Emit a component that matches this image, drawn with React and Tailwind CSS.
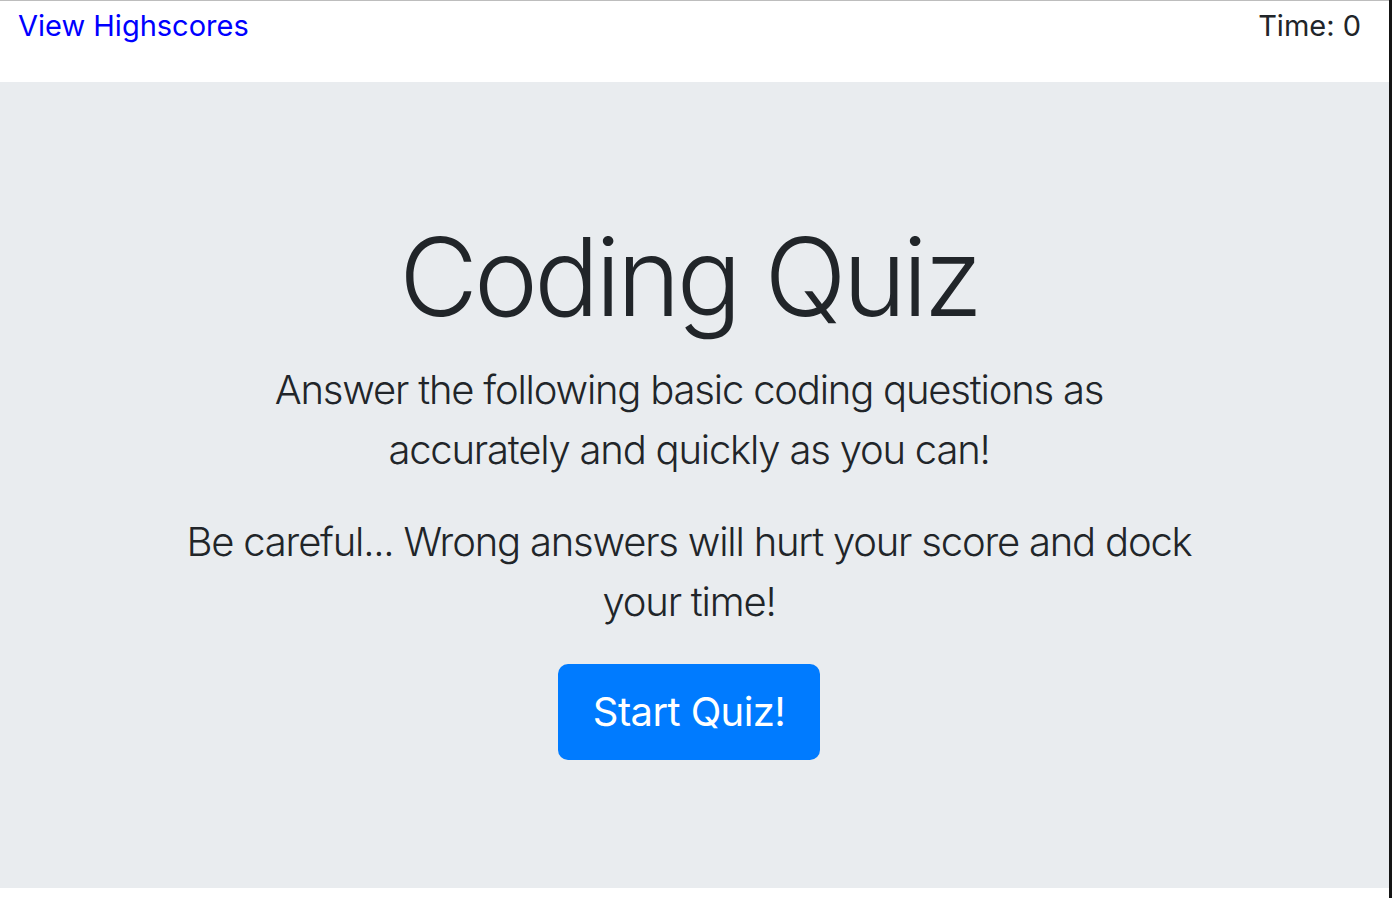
export default function App() {
  return (
    <div
      className="flex min-h-[898px] w-full bg-white"
      style={{ fontFamily: "Inter, 'Noto Sans', sans-serif" }}
    >
      <div className="flex flex-1 flex-col border-t border-[#bdbdbd]">
        <header className="flex h-[81px] items-start justify-between pl-[18px] pr-[28px] pt-[5px]">
          <a href="#highscores" className="text-[29px] leading-[40px] text-[#0000ff]">
            View Highscores
          </a>
          <div className="text-[29px] leading-[40px] text-[#212529]">Time: 0</div>
        </header>

        <section className="bg-[#e9ecef] py-32 pl-8 pr-[43px]">
          <div className="mx-auto flex max-w-[1040px] flex-col items-center text-center text-[#212529]">
            <h1 className="mb-4 text-[108px] font-light leading-[134px] tracking-[-0.035em]">
              Coding Quiz
            </h1>
            <p className="mb-8 max-w-[1010px] text-[40px] font-light leading-[60px] tracking-[-0.03em]">
              Answer the following basic coding questions as accurately and quickly as you can!
            </p>
            <p className="mb-8 max-w-[1010px] text-[40px] font-light leading-[60px] tracking-[-0.03em]">
              Be careful... Wrong answers will hurt your score and dock your time!
            </p>
            <button className="h-[96px] w-[262px] rounded-[10px] bg-[#007bff] text-[40px] leading-[60px] tracking-[-0.015em] text-white">
              Start Quiz!
            </button>
          </div>
        </section>

        <div className="flex-1 bg-white" />
      </div>
      <div className="w-[3px] bg-[#151515]" />
    </div>
  );
}
